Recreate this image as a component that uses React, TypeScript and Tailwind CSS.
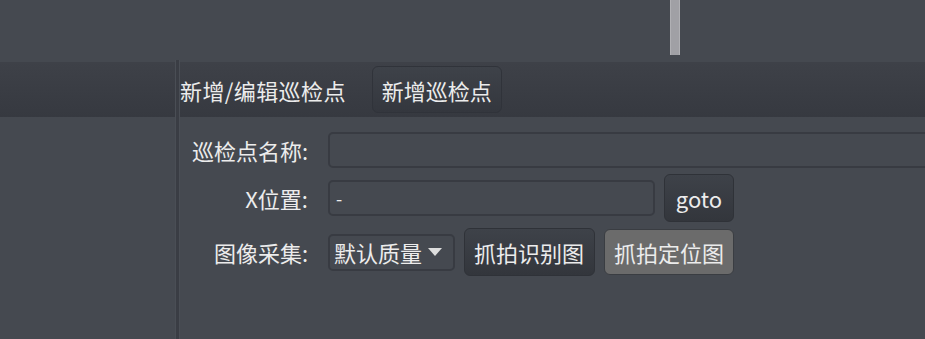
const font = { fontFamily: '"Noto Sans CJK SC", "Noto Sans", sans-serif' };

function FormLabel({ children }: { children: React.ReactNode }) {
  return <div className="w-[130px] shrink-0 text-right pr-[2px]">{children}</div>;
}

const darkBtn =
  "flex items-center rounded-[6px] border border-[#2f3238] bg-gradient-to-b from-[#3e4249] to-[#33363c] px-[9px]";

export default function App() {
  return (
    <div
      className="flex h-[339px] w-[925px] flex-col overflow-hidden bg-[#454950] text-[22px] leading-none text-[#ececec]"
      style={font}
    >
      <div className="h-[60px] shrink-0">
        <div className="ml-[670px] h-[55px] w-[10px] border-x border-[#b0b0b4] bg-[#a0a0a5]" />
      </div>
      <div className="flex flex-1">
        <div className="w-[175px] shrink-0 pt-[2px]">
          <div className="h-[55px] bg-gradient-to-b from-[#3e4148] to-[#363940]" />
        </div>
        <div className="w-[5px] shrink-0 border-x border-[#4a4e55] bg-[#3a3d44]" />
        <div className="flex flex-1 flex-col">
          <div className="mt-[2px] flex h-[55px] items-center bg-gradient-to-b from-[#3e4148] to-[#363940]">
            <span className="tracking-[0.4px]">新增/编辑巡检点</span>
            <div className={`${darkBtn} ml-[26px] h-[47px] border-[#30333a] from-[#3a3d44] to-[#34373e]`}>
              新增巡检点
            </div>
          </div>
          <div className="mt-[15px] flex flex-col gap-[6px]">
            <div className="flex h-[36px] items-center">
              <FormLabel>巡检点名称:</FormLabel>
              <div className="ml-[18px] h-[36px] w-[620px] shrink-0 rounded-[5px] border-2 border-[#383b42]" />
            </div>
            <div className="flex h-[48px] items-center">
              <FormLabel>X位置:</FormLabel>
              <div className="ml-[18px] flex h-[36px] w-[327px] items-center rounded-[5px] border-2 border-[#383b42] pl-[6px] text-[18px]">
                -
              </div>
              <div className={`${darkBtn} ml-[9px] h-[48px] w-[70px] justify-center px-0`}>goto</div>
            </div>
            <div className="flex h-[48px] items-center">
              <FormLabel>图像采集:</FormLabel>
              <div className="ml-[18px] flex h-[37px] w-[127px] items-center rounded-[5px] border-2 border-[#383b42] pl-[4px]">
                <span>默认质量</span>
                <svg width="14" height="9" viewBox="0 0 14 9" className="ml-[6px]">
                  <path d="M0 0 H14 L7 8 Z" fill="#dddddd" />
                </svg>
              </div>
              <div className={`${darkBtn} ml-[9px] h-[48px] w-[131px]`}>抓拍识别图</div>
              <div className="ml-[9px] flex h-[46px] w-[130px] items-center rounded-[6px] border border-[#3a3d42] bg-[#6b6b6b] px-[9px]">
                抓拍定位图
              </div>
            </div>
          </div>
        </div>
      </div>
    </div>
  );
}
